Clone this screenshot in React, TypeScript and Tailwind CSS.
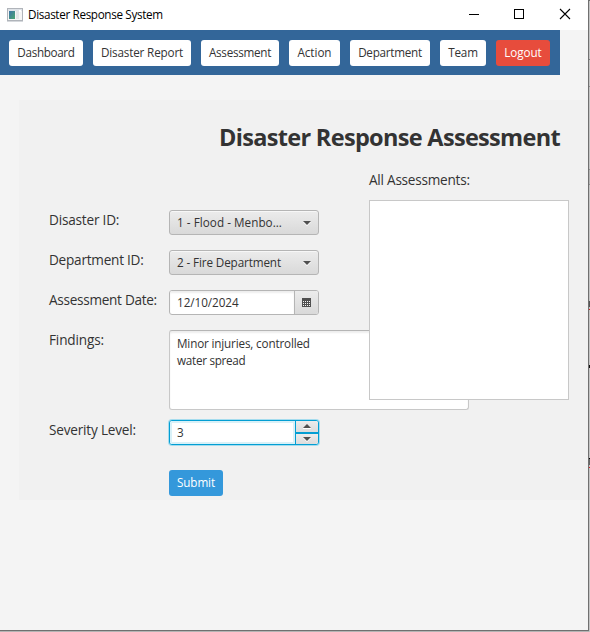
import type { ReactNode } from "react";

const navItems = [
  { label: "Dashboard", style: "w-[74px] bg-white text-[#333] tracking-[-0.34px]" },
  { label: "Disaster Report", style: "w-[98px] bg-white text-[#333] tracking-[-0.16px]" },
  { label: "Assessment", style: "w-[78px] bg-white text-[#333] tracking-[-0.29px]" },
  { label: "Action", style: "w-[51px] bg-white text-[#333] tracking-[-0.05px]" },
  { label: "Department", style: "w-[80px] bg-white text-[#333] tracking-[-0.26px]" },
  { label: "Team", style: "w-[46px] bg-white text-[#333] tracking-[-0.2px]" },
  { label: "Logout", style: "w-[54px] bg-[#e74c3c] text-white tracking-[-0.09px]" },
];

function AppIcon() {
  return (
    <svg width="16" height="14" viewBox="0 0 16 14" shapeRendering="crispEdges">
      <defs>
        <linearGradient id="pane" x1="0" y1="0" x2="1" y2="1">
          <stop offset="0" stopColor="#3c74a8" />
          <stop offset="1" stopColor="#4aa66f" />
        </linearGradient>
      </defs>
      <rect x="0.5" y="0.5" width="15" height="12" fill="#f5f5f5" stroke="#b0b4ba" />
      <rect x="1" y="1" width="14" height="2" fill="#dfe3e8" />
      <rect x="2" y="3" width="6" height="8" fill="url(#pane)" />
      <rect x="9" y="3" width="3" height="8" fill="#e2e5e6" />
      <rect x="12" y="2" width="2" height="2" fill="#fff" />
      <rect x="0" y="13" width="16" height="1" fill="#d5d8dc" />
    </svg>
  );
}

function TitleBar() {
  return (
    <header className="flex h-[30px] items-center bg-white pl-[7px] text-black">
      <AppIcon />
      <span className="ml-[5px] grow pb-[2px] whitespace-nowrap text-[11.7px] leading-[18px] tracking-[-0.34px]">Disaster Response System</span>
      <svg width="120" height="30" viewBox="0 0 120 30" fill="none" stroke="#000" className="shrink-0">
        <path d="M1 14.5H11M46.5 9.5H55.5V18.5H46.5Z" shapeRendering="crispEdges" />
        <path d="M92 9L102 19M102 9L92 19" strokeWidth="1.1" />
      </svg>
    </header>
  );
}

function Row({ label, style, height, children }: { label: string; style: string; height: string; children: ReactNode }) {
  return (
    <div className={"flex w-[420px] " + height}>
      <label className={"w-[120px] shrink-0 whitespace-nowrap text-[13.6px] leading-[20px] text-[#333] " + style}>{label}</label>
      {children}
    </div>
  );
}

function Combo({ text, style }: { text: string; style: string }) {
  return (
    <div className="flex h-[25px] w-[150px] items-center justify-between rounded-[3px] border border-[#b5b5b5] bg-linear-to-b from-[#ececec] to-[#d9d9d9] pr-[7px] pl-[7px] shadow-[inset_0_1px_0_#f7f7f7]">
      <span className={"pb-px whitespace-nowrap " + style}>{text}</span>
      <svg width="8" height="5" viewBox="0 0 8 5" className="mt-px">
        <path d="M0 1H8L4 5Z" fill="#fff" />
        <path d="M0 0H8L4 4Z" fill="#505050" />
      </svg>
    </div>
  );
}

function CalendarIcon() {
  return (
    <svg width="9" height="9" viewBox="0 0 9 9" shapeRendering="crispEdges">
      <rect width="9" height="9" fill="#505050" />
      <path d="M1 3.5H8M1 5.5H8M1 7.5H8" stroke="#f5f5f5" strokeDasharray="1 1" />
    </svg>
  );
}

function Form() {
  return (
    <div className="w-[320px] shrink-0 pt-10 text-[11.7px] leading-[18px] text-[#333]">
      <Row label="Disaster ID:" style="tracking-[-0.2px]" height="h-10">
        <Combo text="1 - Flood - Menbo..." style="tracking-[0.04px]" />
      </Row>
      <Row label="Department ID:" style="tracking-[-0.24px]" height="h-10">
        <Combo text="2 - Fire Department" style="tracking-[-0.12px]" />
      </Row>
      <Row label="Assessment Date:" style="tracking-[-0.29px]" height="h-10">
        <div className="flex h-[25px] w-[150px] overflow-hidden rounded-[3px] border border-[#b5b5b5] bg-white">
          <div className="flex grow items-center pb-px pl-[7px] shadow-[inset_0_2px_2px_#eee]">
            <span className="tracking-[-0.04px]">12/10/2024</span>
          </div>
          <div className="flex w-[24px] items-center justify-center border-l border-[#b5b5b5] bg-linear-to-b from-[#ececec] to-[#d9d9d9]">
            <CalendarIcon />
          </div>
        </div>
      </Row>
      <Row label="Findings:" style="tracking-[-0.15px]" height="h-[90px]">
        <div className="h-[80px] w-[300px] shrink-0 rounded-[3px] border border-[#c8c8c8] border-t-[#b5b5b5] bg-white pt-[4px] pl-[7px] leading-[17px] shadow-[inset_0_2px_2px_#eee]">
          <p className="w-[150px]">
            <span className="tracking-[-0.16px]">Minor injuries, controlled</span>
            <br />
            <span className="tracking-[-0.28px]">water spread</span>
          </p>
        </div>
      </Row>
      <Row label="Severity Level:" style="tracking-[-0.2px]" height="h-[50px]">
        <div className="flex h-[25px] w-[150px] overflow-hidden rounded-[3px] border border-[#039ed3] bg-white shadow-[0_0_0_1px_#a5dcee]">
          <div className="flex grow items-center pb-px pl-[7px] shadow-[inset_0_0_0_2px_#d9f1f8]">
            <span>3</span>
          </div>
          <div className="flex w-[23px] flex-col border-l border-[#039ed3]">
            <div className="flex h-[11px] items-center justify-center bg-linear-to-b from-[#ececec] to-[#dcdcdc]">
              <svg width="8" height="5" viewBox="0 0 8 5">
                <path d="M0 4H8V5H0Z" fill="#fff" />
                <path d="M0 4H8L4 0Z" fill="#505050" />
              </svg>
            </div>
            <div className="flex h-[12px] items-center justify-center border-t-2 border-[#039ed3] bg-linear-to-b from-[#ececec] to-[#dcdcdc]">
              <svg width="8" height="5" viewBox="0 0 8 5">
                <path d="M0 1H8L4 5Z" fill="#fff" />
                <path d="M0 0H8L4 4Z" fill="#505050" />
              </svg>
            </div>
          </div>
        </div>
      </Row>
      <button className="ml-[120px] flex h-[26px] w-[54px] items-center justify-center rounded-[3px] bg-[#3498db] pb-[2px] text-white">
        <span className="tracking-[-0.09px]">Submit</span>
      </button>
    </div>
  );
}

// Sliver of the desktop visible past the window's right border.
function DesktopEdge() {
  return (
    <svg width="1" height="632" viewBox="0 0 1 632" shapeRendering="crispEdges" className="shrink-0">
      <rect width="1" height="632" fill="#c4c4c4" />
      <rect y="0" width="1" height="1" fill="#707070" />
      <rect y="59" width="1" height="1" fill="#808080" />
      <rect y="86" width="1" height="1" fill="#909090" />
      <rect y="169" width="1" height="15" fill="#b4b4b4" />
      <rect y="169" width="1" height="1" fill="#909090" />
      <rect y="184" width="1" height="1" fill="#909090" />
      <rect y="301" width="1" height="6" fill="#555" />
      <rect y="309" width="1" height="1" fill="#d22" />
      <rect y="365" width="1" height="3" fill="#111" />
      <rect y="458" width="1" height="7" fill="#666" />
      <rect y="458" width="1" height="1" fill="#000" />
      <rect y="467" width="1" height="1" fill="#d22" />
    </svg>
  );
}

export default function App() {
  return (
    <div className="flex h-[632px] w-[590px] overflow-hidden bg-[#b4b4b4] font-['Open_Sans','Noto_Sans',sans-serif]">
      <div className="h-[631px] w-[589px] shrink-0 overflow-hidden border-r border-b border-[#707070] bg-[#f4f4f4]">
        <TitleBar />
        <nav className="flex h-[45px] w-[560px] gap-[10px] bg-[#336699] pt-[10px] pl-[9px]">
          {navItems.map((item) => (
            <button key={item.label} className={"flex h-[26px] shrink-0 items-center justify-center rounded-[3px] pb-[2px] text-[11.7px] leading-[18px] whitespace-nowrap " + item.style}>
              {item.label}
            </button>
          ))}
        </nav>
        <main className="mt-[25px] ml-[19px] h-[400px] bg-[#f1f1f1] pl-[30px]">
          <div className="flex h-[70px] pt-[20px] pl-[170px]">
            <h1 className="text-[23.5px] leading-[34px] font-bold tracking-[-0.68px] whitespace-nowrap text-[#333]">Disaster Response Assessment</h1>
          </div>
          <div className="flex">
            <Form />
            <section className="relative z-10 w-[200px] shrink-0">
              <h2 className="h-[30px] text-[13.6px] leading-[20px] tracking-[-0.24px] whitespace-nowrap text-[#333]">All Assessments:</h2>
              <div className="h-[200px] border border-[#c8c8c8] bg-white" />
            </section>
          </div>
        </main>
      </div>
      <DesktopEdge />
    </div>
  );
}
